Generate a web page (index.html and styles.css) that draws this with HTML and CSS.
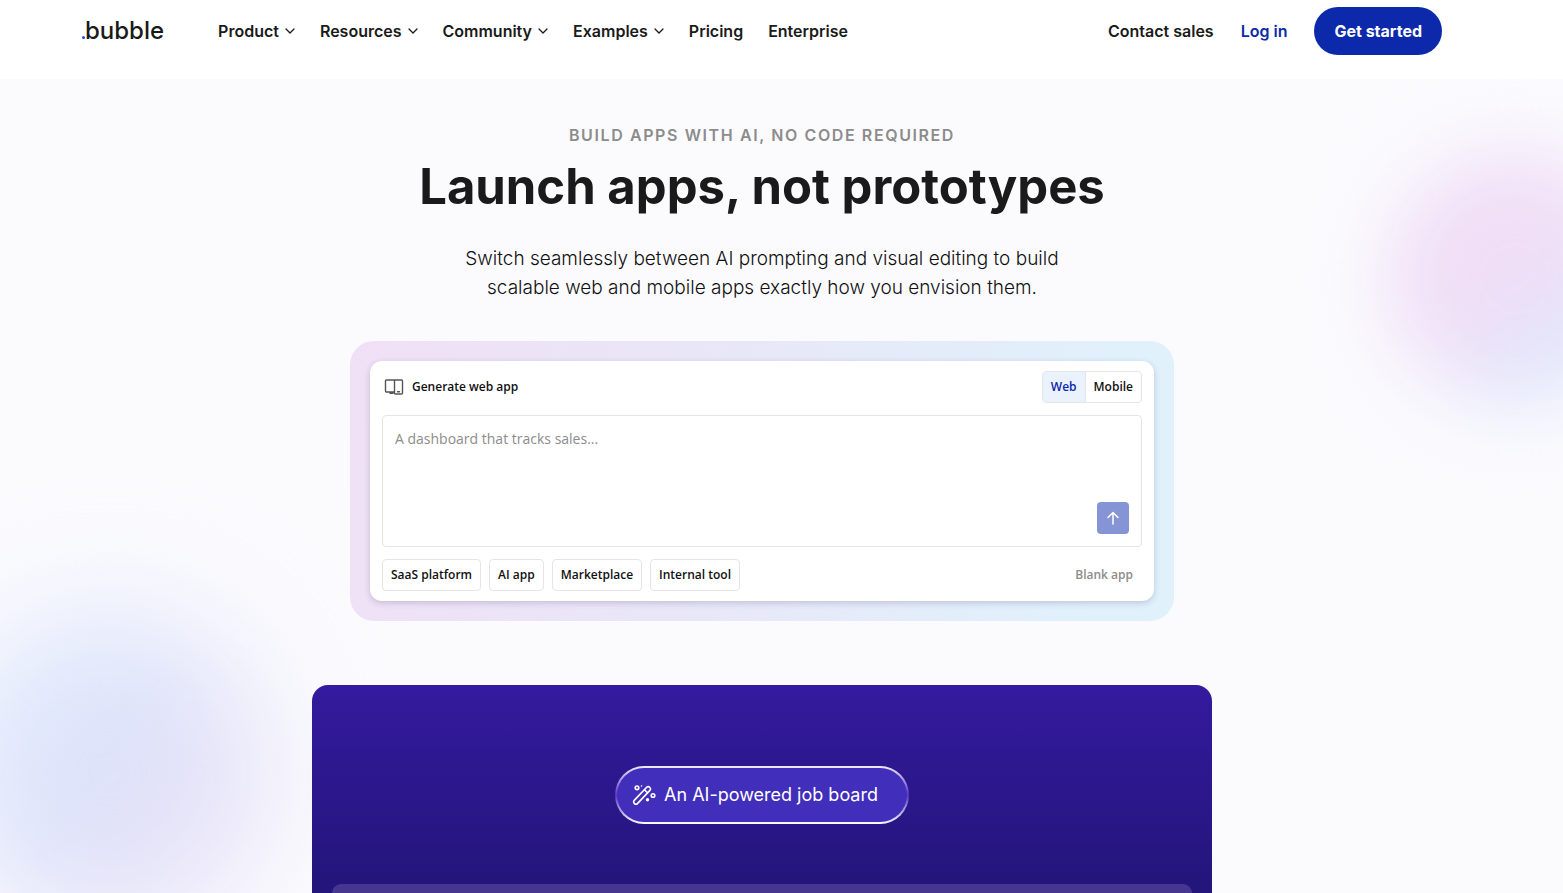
FILE: index.html
```html
<!DOCTYPE html>
<html lang="en">
<head>
	<meta charset="UTF-8">
	<title>Bubble</title>
	<meta name="viewport" content="width=device-width,initial-scale=1">
	<link rel="stylesheet" href="styles.css">
</head>
<body>
	<header class="header">
		<a href="#" class="logo"><span class="logo-dot"></span>bubble</a>
		<nav class="nav">
			<button type="button" class="nav-item">Product
				<svg class="chevron" viewBox="0 0 10 6"><path d="M1 1l4 4 4-4"/></svg>
			</button>
			<button type="button" class="nav-item">Resources
				<svg class="chevron" viewBox="0 0 10 6"><path d="M1 1l4 4 4-4"/></svg>
			</button>
			<button type="button" class="nav-item">Community
				<svg class="chevron" viewBox="0 0 10 6"><path d="M1 1l4 4 4-4"/></svg>
			</button>
			<button type="button" class="nav-item">Examples
				<svg class="chevron" viewBox="0 0 10 6"><path d="M1 1l4 4 4-4"/></svg>
			</button>
			<a href="#" class="nav-item">Pricing</a>
			<a href="#" class="nav-item">Enterprise</a>
		</nav>
		<div class="account">
			<a href="#" class="nav-item">Contact sales</a>
			<a href="#" class="nav-item login">Log in</a>
			<a href="#" class="cta">Get started</a>
		</div>
	</header>
	<main class="hero">
		<div class="glow glow-right"></div>
		<div class="glow glow-left"></div>
		<p class="eyebrow">Build apps with AI, no code required</p>
		<h1 class="title">Launch apps, not prototypes</h1>
		<p class="lead">Switch seamlessly between AI prompting and visual editing to build<br>scalable web and mobile apps exactly how you envision them.</p>
		<section class="frame">
			<form class="card">
				<div class="card-top">
					<label for="prompt" class="card-label">
						<svg class="devices" viewBox="0 0 20 18">
							<path d="M10.500 14H2.500a1 1 0 0 1-1-1V3a1 1 0 0 1 1-1h15a1 1 0 0 1 1 1v12a1 1 0 0 1-1 1h-6a1 1 0 0 1-1-1V2M6 15.300h3M13.500 13.800h2"/>
						</svg>
						Generate web app
					</label>
					<div class="toggle">
						<button type="button" class="toggle-item active">Web</button>
						<button type="button" class="toggle-item">Mobile</button>
					</div>
				</div>
				<div class="prompt">
					<textarea id="prompt" class="prompt-text" placeholder="A dashboard that tracks sales..."></textarea>
					<button type="submit" class="send" aria-label="Send">
						<svg class="arrow" viewBox="0 0 14 14"><path d="M7 13V1.500M2 6.500l5-5 5 5"/></svg>
					</button>
				</div>
				<div class="card-bottom">
					<button type="button" class="chip">SaaS platform</button>
					<button type="button" class="chip">AI app</button>
					<button type="button" class="chip">Marketplace</button>
					<button type="button" class="chip">Internal tool</button>
					<button type="button" class="chip blank">Blank app</button>
				</div>
			</form>
		</section>
		<section class="demo">
			<div class="pill">
				<svg class="wand" viewBox="0 0 24 22">
					<path d="M2.200 16.400L14.700 3.200a2 2 0 0 1 2.900 0l.3.300a2 2 0 0 1 0 2.900L5.400 19.600a2 2 0 0 1-2.900 0l-.3-.300a2 2 0 0 1 0-2.900zM12.500 5.800l2.900 2.900"/>
					<circle cx="5" cy="3.800" r="1.800"/>
					<circle cx="21" cy="11.500" r="1.800"/>
					<circle class="wand-dot" cx="15.500" cy="15.800" r="1.700"/>
					<circle class="wand-dot" cx="9.500" cy="2" r=".8"/>
				</svg>
				An AI-powered job board
			</div>
			<div class="window"></div>
		</section>
	</main>
</body>
</html>
```
FILE: styles.css
```css
*{
	box-sizing: border-box;
}
body{
	margin: 0;
	height: 100vh;
	display: flex;
	flex-direction: column;
	overflow: hidden;
	background: #fff;
	color: #1a1a1a;
	font-family: Inter,"Liberation Sans",sans-serif;
}
a{
	color: inherit;
	text-decoration: none;
}
button{
	margin: 0;
	padding: 0;
	border: 0;
	background: none;
	color: inherit;
	font: inherit;
	cursor: pointer;
}
svg{
	fill: none;
	stroke: currentColor;
	stroke-linecap: round;
	stroke-linejoin: round;
}

/* header */
.header{
	display: flex;
	align-items: center;
	padding: 7px 121px 24px 82px;
}
.logo{
	display: flex;
	align-items: baseline;
	margin-right: 54px;
	font-size: 24px;
	line-height: 32px;
	font-weight: 500;
}
.logo-dot{
	width: 3px;
	height: 3px;
	border-radius: 50%;
	background: #1a4fe0;
}
.nav{
	display: flex;
	gap: 25px;
}
.nav-item{
	display: flex;
	align-items: center;
	gap: 6px;
	font-size: 16px;
	line-height: 24px;
	font-weight: 600;
	white-space: nowrap;
}
.chevron{
	width: 10px;
	height: 6px;
	stroke-width: 1.3;
}
.account{
	display: flex;
	align-items: center;
	gap: 27px;
	margin-left: auto;
}
.login{
	color: #0c29ab;
}
.cta{
	padding: 12px 20px;
	border-radius: 24px;
	background: #0c29ab;
	color: #fff;
	font-size: 16px;
	line-height: 24px;
	font-weight: 700;
	white-space: nowrap;
}

/* hero */
.hero{
	flex: 1;
	position: relative;
	z-index: 0;
	display: flex;
	flex-direction: column;
	align-items: center;
	padding: 44px 39px 0 0;
	overflow: hidden;
	background: #fbfbfe;
}
.glow{
	position: absolute;
	z-index: -1;
	border-radius: 50%;
}
.glow-right{
	top: 72px;
	right: -80px;
	width: 256px;
	height: 256px;
	background: linear-gradient(145deg,#f0def6 50%,#e0e6fb 75%);
	filter: blur(36px);
}
.glow-left{
	left: -50px;
	bottom: -40px;
	width: 320px;
	height: 320px;
	background: linear-gradient(125deg,#dfeafe 10%,#dde1f9 50%,#ece3f7 90%);
	filter: blur(56px);
}
.eyebrow{
	margin: 0;
	color: #8c8c8c;
	font-size: 16px;
	line-height: 24px;
	font-weight: 600;
	letter-spacing: 0.1em;
	text-transform: uppercase;
}
.title{
	margin: 8px 0 25px;
	font-size: 49px;
	line-height: 64px;
	font-weight: 700;
}
.lead{
	margin: 0 0 39px;
	color: #111;
	font-size: 19px;
	line-height: 29px;
	font-weight: 300;
	text-align: center;
}

/* prompt card */
.frame{
	width: 824px;
	max-width: 100%;
	padding: 20px;
	border-radius: 24px;
	background: linear-gradient(100deg,#f0e0f6,#e8e7f8 45%,#e0f1fc 90%);
}
.card{
	display: flex;
	flex-direction: column;
	gap: 12px;
	padding: 10px 12px;
	border-radius: 12px;
	background: #fff;
	box-shadow: 0 2px 6px rgba(40,30,80,.2);
	color: #111;
	font: 600 12px/16px "Open Sans",sans-serif;
}
.card-top,
.card-label,
.toggle,
.card-bottom{
	display: flex;
	align-items: center;
}
.card-top{
	justify-content: space-between;
}
.card-label{
	gap: 8px;
	padding-left: 2px;
}
.devices{
	width: 20px;
	height: 18px;
	stroke: #555;
	stroke-width: 1.4;
}
.toggle{
	border: 1px solid #e5e5e5;
	border-radius: 4px;
	overflow: hidden;
}
.toggle-item{
	padding: 7px 8px;
}
.toggle-item.active{
	border-right: 1px solid #e5e5e5;
	background: #eaf2fe;
	color: #0c29ab;
}
.prompt{
	display: flex;
	align-items: flex-end;
	height: 132px;
	padding: 12px;
	border: 1px solid #e5e5e5;
	border-radius: 4px;
}
.prompt-text{
	flex: 1;
	align-self: stretch;
	padding: 0;
	border: 0;
	outline: 0;
	resize: none;
	background: none;
	color: #1a1a1a;
	font: 14px/22px "Open Sans",sans-serif;
}
.prompt-text::placeholder{
	color: #8c8c8c;
}
.send{
	display: flex;
	align-items: center;
	justify-content: center;
	width: 32px;
	height: 32px;
	border-radius: 4px;
	background: #8594d5;
	color: #fff;
}
.arrow{
	width: 14px;
	height: 14px;
	stroke-width: 1.5;
}
.card-bottom{
	gap: 8px;
}
.chip{
	padding: 7px 8px;
	border: 1px solid #e5e5e5;
	border-radius: 4px;
}
.blank{
	margin-left: auto;
	border-color: transparent;
	color: #8c8c8c;
}

/* demo */
.demo{
	flex: 1;
	display: flex;
	flex-direction: column;
	align-items: center;
	width: 900px;
	max-width: 100%;
	margin-top: 64px;
	padding: 81px 20px 0;
	border-radius: 16px 16px 0 0;
	background: linear-gradient(#341a9e,#23157a);
}
.pill{
	display: flex;
	align-items: center;
	gap: 8px;
	padding: 13px 29px 13px 15px;
	border: 2px solid transparent;
	border-radius: 29px;
	background: linear-gradient(#412eba,#412eba) padding-box,linear-gradient(#f2eefb,#5a35c4 50%,#fff) border-box;
	color: #fff;
	font-size: 18px;
	line-height: 28px;
}
.wand{
	width: 24px;
	height: 22px;
	stroke-width: 1.6;
}
.wand-dot{
	fill: currentColor;
	stroke: none;
}
.window{
	flex: 1;
	align-self: stretch;
	margin-top: 60px;
	border-radius: 10px 10px 0 0;
	background: #473690;
}
```
